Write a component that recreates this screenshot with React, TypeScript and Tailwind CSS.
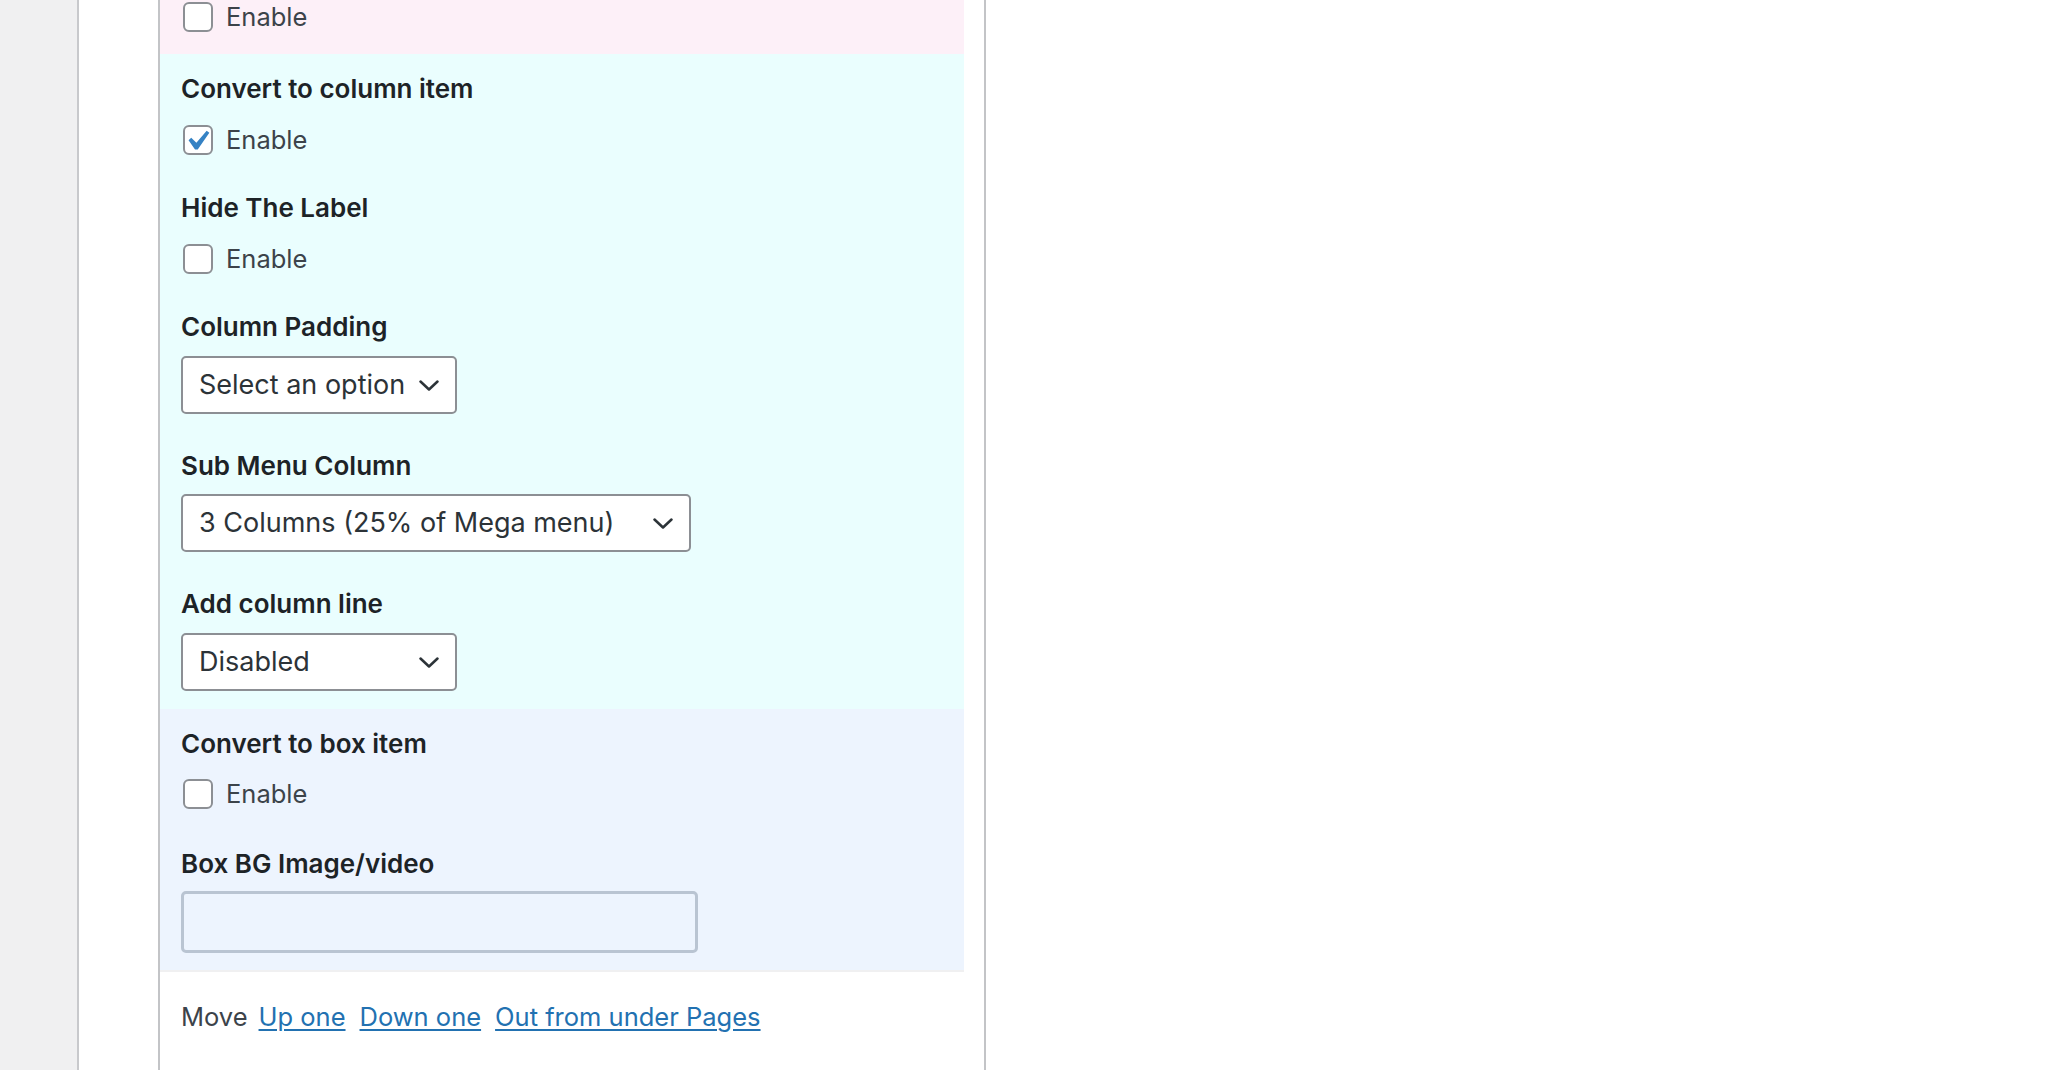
import React from 'react';

const Chevron = () => (
  <svg width="20" height="11" viewBox="0 0 20 11" fill="none" className="shrink-0">
    <path d="M1.5 1.5 L10 9.5 L18.5 1.5" stroke="#2c3338" strokeWidth="2.5" strokeLinecap="round" strokeLinejoin="round" />
  </svg>
);

const CheckRow: React.FC<{ checked?: boolean }> = ({ checked }) => (
  <label className="flex h-[30px] items-center gap-[13px]">
    <span className="relative ml-[2px] block h-[30px] w-[30px] shrink-0 rounded-[6px] border-2 border-[#8c8f94] bg-white">
      {checked && (
        <svg className="absolute left-0 top-0" width="26" height="26" viewBox="4 3 13 13">
          <path d="M14.83 4.89l1.34.94-5.81 8.38H9.02L5.78 9.67l1.34-1.25 2.57 2.4z" fill="#3582c4" />
        </svg>
      )}
    </span>
    <span className="text-[25.5px] leading-[30px] text-[#3c434a]">Enable</span>
  </label>
);

const Label: React.FC<{ children: React.ReactNode }> = ({ children }) => (
  <div className="text-[26px] font-semibold leading-[30px] text-[#1d2327]">{children}</div>
);

const Select: React.FC<{ value: string; width: string }> = ({ value, width }) => (
  <div
    className={`flex h-[58px] items-center justify-between rounded-[5px] border-2 border-[#8c8f94] bg-white pl-[16px] pr-[16px] ${width}`}
  >
    <span className="text-[27px] leading-[34px] text-[#2c3338]">{value}</span>
    <Chevron />
  </div>
);

export default function App() {
  return (
    <div className="flex h-[1070px] w-[2066px] overflow-hidden bg-white font-['Inter',sans-serif]">
      <div className="w-[79px] shrink-0 border-r-2 border-[#c8c9cc] bg-[#f0f0f1]" />
      <div className="w-[79px] shrink-0" />
      <div className="w-[828px] shrink-0 border-x-2 border-[#c3c4c7] pr-[20px]">
        <section className="bg-[#fdf0f8] pb-[22px] pl-[21px] pt-[2px]">
          <CheckRow />
        </section>

        <section className="bg-[#eafefe] pb-[18px] pl-[21px] pt-[20px]">
          <Label>Convert to column item</Label>
          <div className="mt-[21px]">
            <CheckRow checked />
          </div>

          <div className="mt-[38px]">
            <Label>Hide The Label</Label>
          </div>
          <div className="mt-[21px]">
            <CheckRow />
          </div>

          <div className="mt-[38px]">
            <Label>Column Padding</Label>
          </div>
          <div className="mt-[14px]">
            <Select value="Select an option" width="w-[276px]" />
          </div>

          <div className="mt-[37px]">
            <Label>Sub Menu Column</Label>
          </div>
          <div className="mt-[13px]">
            <Select value="3 Columns (25% of Mega menu)" width="w-[510px]" />
          </div>

          <div className="mt-[37px]">
            <Label>Add column line</Label>
          </div>
          <div className="mt-[14px]">
            <Select value="Disabled" width="w-[276px]" />
          </div>
        </section>

        <section className="border-b-2 border-[#f0f0f1] bg-[#edf4fe] pb-[17px] pl-[21px] pt-[20px]">
          <Label>Convert to box item</Label>
          <div className="mt-[20px]">
            <CheckRow />
          </div>

          <div className="mt-[40px]">
            <Label>Box BG Image/video</Label>
          </div>
          <div className="mt-[12px] h-[62px] w-[517px] rounded-[5px] border-[3px] border-[#b9c4d2]" />
        </section>

        <div className="mt-[30px] flex items-center pl-[21px] text-[25.5px] leading-[30px]">
          <span className="mr-[11px] text-[#3c434a]">Move</span>
          <a href="#" className="mr-[14px] text-[#2271b1] underline underline-offset-[3px]">Up one</a>
          <a href="#" className="mr-[14px] text-[#2271b1] underline underline-offset-[3px]">Down one</a>
          <a href="#" className="text-[#2271b1] underline underline-offset-[3px]">Out from under Pages</a>
        </div>
      </div>
      <div className="flex-1" />
    </div>
  );
}
